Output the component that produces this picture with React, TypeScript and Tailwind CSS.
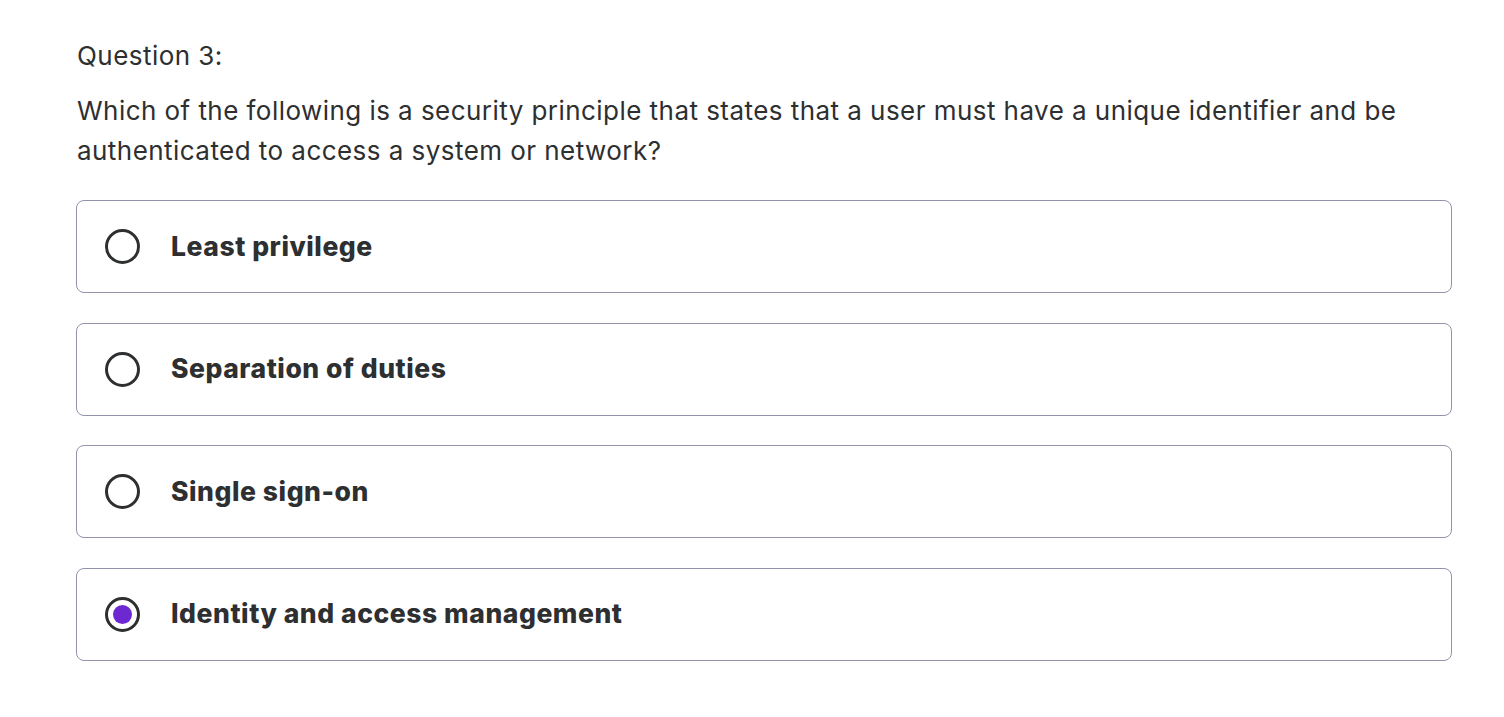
import { useState } from "react";

const options = [
  "Least privilege",
  "Separation of duties",
  "Single sign-on",
  "Identity and access management",
];

function Radio({ checked }: { checked: boolean }) {
  return (
    <span className="w-[35px] h-[35px] rounded-full border-[3px] border-[#2d2f31] flex items-center justify-center shrink-0">
      {checked && <span className="w-[19px] h-[19px] rounded-full bg-[#6d28d2]" />}
    </span>
  );
}

export default function App() {
  const [selected, setSelected] = useState(3);

  return (
    <div className="bg-white min-h-screen pl-[77px] pr-[52px] pt-[39px] text-[#2d2f31] font-['Inter',sans-serif]">
      <div className="text-[26px] leading-[34px] tracking-[0.45px]">Question 3:</div>
      <div className="text-[26px] leading-[40px] tracking-[0.45px] mt-[18px]">
        Which of the following is a security principle that states that a user must have a unique identifier and be
        authenticated to access a system or network?
      </div>
      <div className="flex flex-col gap-[29.5px] mt-[29px] -ml-px">
        {options.map((o, i) => (
          <button
            key={o}
            onClick={() => setSelected(i)}
            className="h-[93px] border border-[#9194ac] rounded-lg flex items-center pl-[28px] gap-[31px] text-left"
          >
            <Radio checked={selected === i} />
            <span className="font-extrabold text-[26.5px] tracking-[0.55px]">{o}</span>
          </button>
        ))}
      </div>
    </div>
  );
}
